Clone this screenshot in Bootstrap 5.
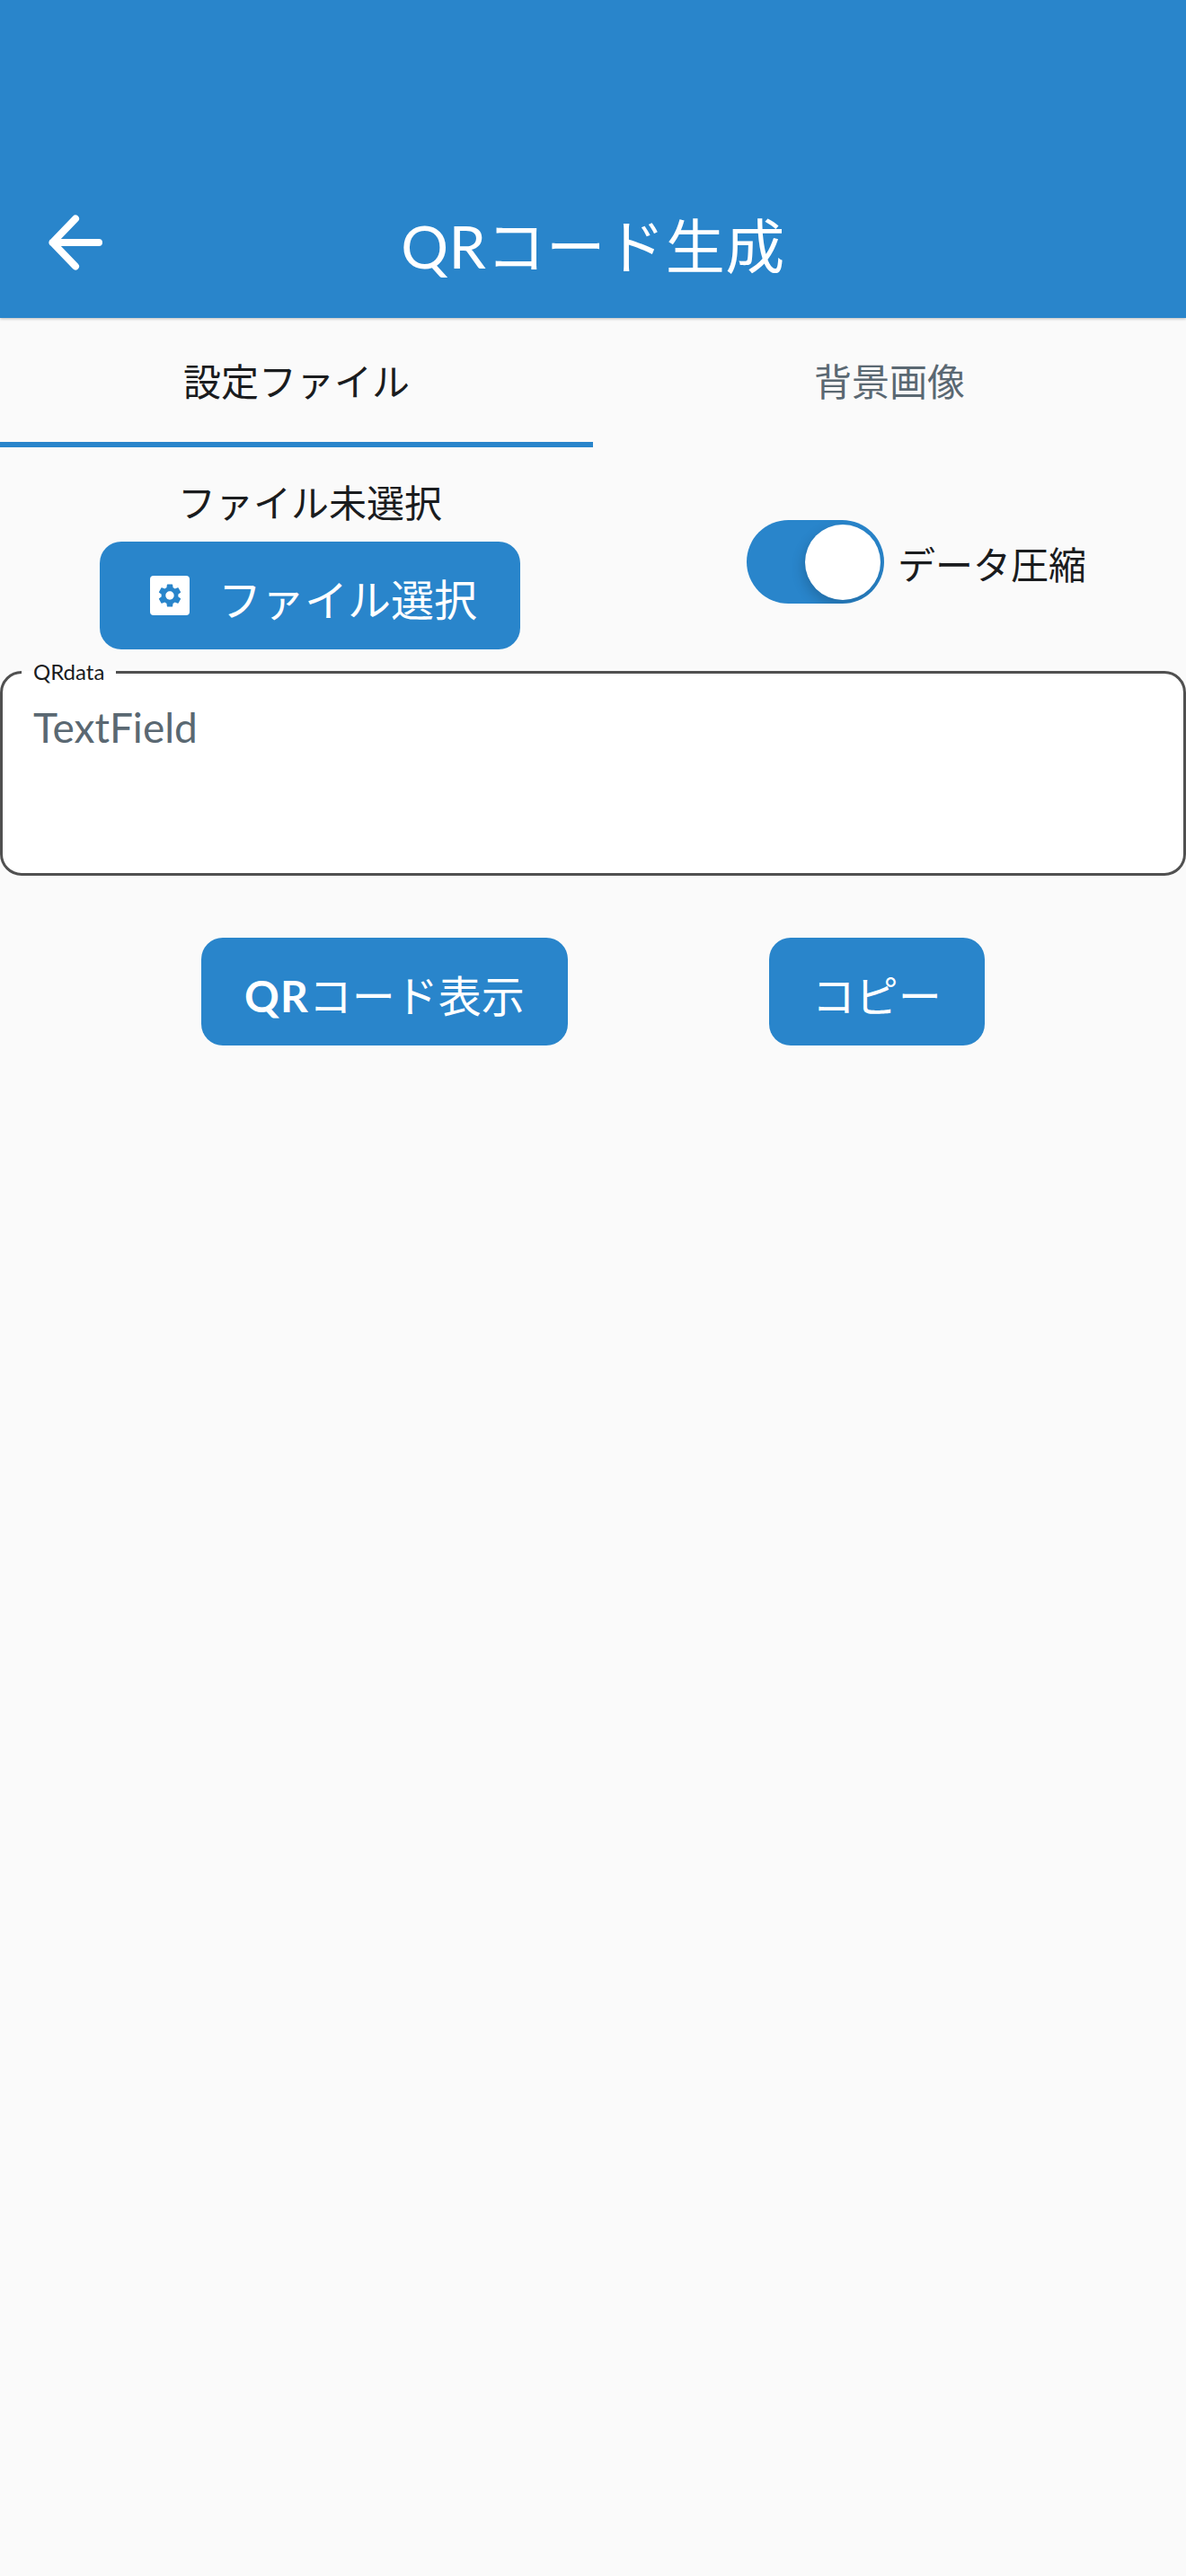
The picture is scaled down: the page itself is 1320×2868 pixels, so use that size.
<!DOCTYPE html>
<html lang="ja">
<head>
<meta charset="utf-8">
<title>QRコード生成</title>
<link rel="stylesheet" href="https://cdn.jsdelivr.net/npm/bootstrap@5.3.0/dist/css/bootstrap.min.css">
<style>
:root { --brand: #2985cb; }
html, body { background: #fafafa; }
body { font-family: "Lato", "Noto Sans CJK JP", sans-serif; color: #1a1c1e; min-height: 2868px; }
.app-head { background: var(--brand); height: 354px; padding-top: 186px; box-shadow: 0 1px 3px rgba(0,0,0,.25); position: relative; }
.head-side { width: 168px; flex: none; }
.head-back { background: none; border: 0; padding: 0; width: 72px; height: 72px; display: block; margin: 0 auto; }
.head-title { font-size: 66px; line-height: 1; color: #fff; font-weight: 400; letter-spacing: .5px; margin: 8px 0 0; }
.tab-strip { height: 144px; }
.tab-item { flex: 1 1 50%; font-size: 42px; line-height: 1; color: #5a6872; padding: 4px 0 0; border-bottom: 6px solid transparent; background: none; border-top: 0; border-left: 0; border-right: 0; display: block; height: 144px; align-self: flex-start; }
.tab-item.is-on { color: #1a1c1e; border-bottom-color: var(--brand); }
.top-row { padding: 30px 0 24px; }
.file-name { font-size: 42px; line-height: 65px; height: 75px; }
.app-btn { background: var(--brand); color: #fff; border: 0; border-radius: 24px; height: 120px; padding: 10px 48px 0; font-size: 48px; line-height: 1; font-weight: 400; }
.app-btn:hover { background: var(--brand); color: #fff; }
.btn-ico { width: 60px; height: 60px; margin: -10px 24px 0 0; flex: none; }
.qr-bold { font-weight: 700; letter-spacing: 1px; }
.sw-wrap { margin-left: 30px; }
.sw-track { width: 153px; height: 93px; border-radius: 47px; background: var(--brand); padding: 4px; overflow: hidden; }
.sw-thumb { width: 84px; height: 84px; border-radius: 50%; background: #fff; box-shadow: -2px 6px 14px rgba(0,0,0,.18); }
.sw-label { font-size: 42px; line-height: 1; margin: 6px 0 0 15px; }
.field-box { height: 228px; background: #fff; border: 3px solid #505050; border-radius: 24px; padding: 37px 34px; position: relative; }
.field-label { position: absolute; left: 21px; top: -14px; padding: 0 13px; font-size: 24px; line-height: 24px; color: #1a1c1e; background: linear-gradient(#fafafa 0 11px, #fff 11px); }
.field-hint { font-size: 46px; line-height: 1; color: #5a6872; }
.action-row { margin-top: 69px; }
</style>
</head>
<body>
<header class="app-head d-flex align-items-center">
  <div class="head-side">
    <button class="head-back" type="button" aria-label="戻る">
      <svg width="72" height="72" viewBox="0 0 72 72" fill="none" stroke="#fff" stroke-width="8" stroke-linecap="round" stroke-linejoin="round"><path d="M62 36H10.500M36 9.500L10.500 36L36 62.500"/></svg>
    </button>
  </div>
  <h1 class="head-title flex-grow-1 text-center">QRコード生成</h1>
  <div class="head-side"></div>
</header>
<nav class="tab-strip d-flex">
  <button class="tab-item is-on text-center" type="button">設定ファイル</button>
  <button class="tab-item text-center" type="button">背景画像</button>
</nav>
<section class="top-row d-flex justify-content-around align-items-center">
  <div class="d-flex flex-column align-items-center">
    <div class="file-name">ファイル未選択</div>
    <button class="btn app-btn d-flex align-items-center" type="button">
      <svg class="btn-ico" viewBox="0 0 60 60"><rect x="8" y="8" width="44" height="44" rx="4" fill="#fff"/><path transform="translate(30 30) scale(1.3) translate(-12 -12)" fill="#2985cb" fill-rule="evenodd" d="M19.140 12.940c.04-.3.06-.61.06-.94 0-.32-.02-.64-.07-.94l2.030-1.580c.18-.14.23-.41.12-.61l-1.920-3.320c-.12-.22-.37-.29-.59-.22l-2.390.96c-.5-.38-1.030-.7-1.620-.94l-.36-2.540c-.04-.24-.24-.41-.48-.41h-3.840c-.24 0-.43.17-.47.41l-.36 2.540c-.59.24-1.130.57-1.620.94l-2.390-.96c-.22-.08-.47 0-.59.22L2.740 8.870c-.12.21-.08.47.12.61l2.030 1.580c-.05.3-.09.63-.09.94s.02.64.07.94l-2.030 1.580c-.18.14-.23.41-.12.61l1.920 3.320c.12.22.37.29.59.22l2.390-.96c.5.38 1.030.7 1.620.94l.36 2.540c.05.24.24.41.48.41h3.840c.24 0 .44-.17.47-.41l.36-2.540c.59-.24 1.130-.56 1.620-.94l2.390.96c.22.08.47 0 .59-.22l1.920-3.320c.12-.22.07-.47-.12-.61l-2.010-1.580zM12 15.600c-1.980 0-3.600-1.620-3.600-3.600s1.620-3.600 3.600-3.600 3.600 1.620 3.600 3.600-1.620 3.600-3.600 3.600z"/></svg>
      <span>ファイル選択</span>
    </button>
  </div>
  <div class="sw-wrap d-flex align-items-center">
    <div class="sw-track d-flex justify-content-end align-items-center" role="switch" aria-checked="true"><div class="sw-thumb"></div></div>
    <span class="sw-label">データ圧縮</span>
  </div>
</section>
<section class="field-box">
  <span class="field-label">QRdata</span>
  <div class="field-hint">TextField</div>
</section>
<section class="action-row d-flex justify-content-evenly">
  <button class="btn app-btn" type="button"><span class="qr-bold">QR</span>コード表示</button>
  <button class="btn app-btn" type="button">コピー</button>
</section>
<script src="https://cdn.jsdelivr.net/npm/bootstrap@5.3.0/dist/js/bootstrap.bundle.min.js"></script>
</body>
</html>
